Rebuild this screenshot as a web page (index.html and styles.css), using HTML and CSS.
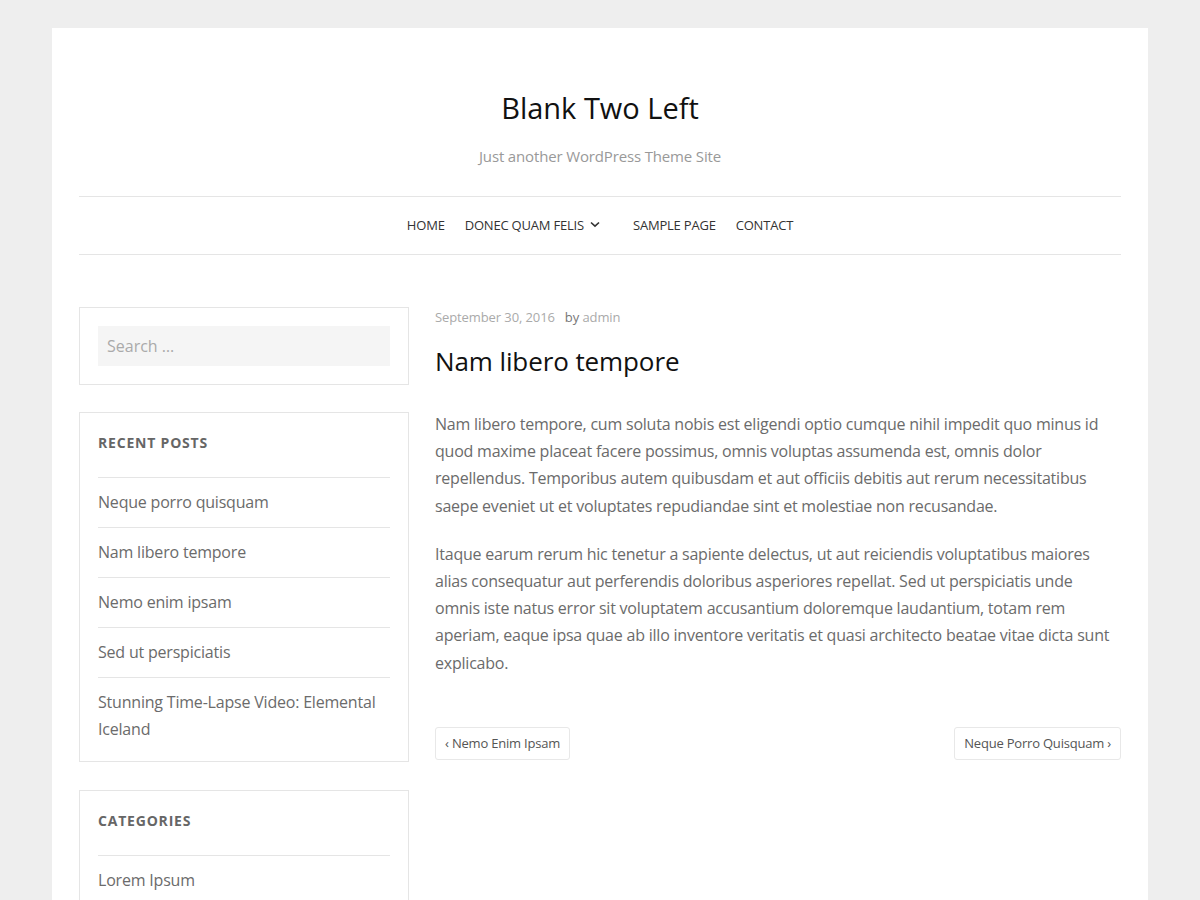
FILE: index.html
```html
<!DOCTYPE html>
<html lang="en">
<head>
<meta charset="utf-8">
<title>Blank Two Left</title>
<link rel="stylesheet" href="styles.css">
</head>
<body>
<div class="page">
  <header class="site-header">
    <h1 class="site-title">Blank Two Left</h1>
    <p class="site-desc">Just another WordPress Theme Site</p>
  </header>
  <nav class="main-nav">
    <ul class="menu">
      <li><a href="#">Home</a></li>
      <li class="has-sub"><a href="#">Donec quam felis</a>
        <svg class="chev" width="10" height="7" viewBox="0 0 10 7"><path d="M1 1.5 L5 5.2 L9 1.5" fill="none" stroke="#333" stroke-width="1.6"/></svg>
      </li>
      <li><a href="#">Sample Page</a></li>
      <li><a href="#">Contact</a></li>
    </ul>
  </nav>
  <div class="layout">
    <aside class="sidebar">
      <section class="widget search-widget">
        <input class="search-field" type="search" placeholder="Search …">
      </section>
      <section class="widget">
        <h2 class="widget-title">Recent Posts</h2>
        <ul class="widget-list">
          <li><a href="#">Neque porro quisquam</a></li>
          <li><a href="#">Nam libero tempore</a></li>
          <li><a href="#">Nemo enim ipsam</a></li>
          <li><a href="#">Sed ut perspiciatis</a></li>
          <li><a href="#">Stunning Time-Lapse Video: Elemental Iceland</a></li>
        </ul>
      </section>
      <section class="widget">
        <h2 class="widget-title">Categories</h2>
        <ul class="widget-list">
          <li><a href="#">Lorem Ipsum</a></li>
        </ul>
      </section>
    </aside>
    <main class="content">
      <article class="post">
        <div class="entry-meta"><span class="date">September 30, 2016</span><span class="by">by</span> <span class="author">admin</span></div>
        <h2 class="entry-title">Nam libero tempore</h2>
        <div class="entry-content">
          <p>Nam libero tempore, cum soluta nobis est eligendi optio cumque nihil impedit quo minus id quod maxime placeat facere possimus, omnis voluptas assumenda est, omnis dolor repellendus. Temporibus autem quibusdam et aut officiis debitis aut rerum necessitatibus saepe eveniet ut et voluptates repudiandae sint et molestiae non recusandae.</p>
          <p>Itaque earum rerum hic tenetur a sapiente delectus, ut aut reiciendis voluptatibus maiores alias consequatur aut perferendis doloribus asperiores repellat. Sed ut perspiciatis unde omnis iste natus error sit voluptatem accusantium doloremque laudantium, totam rem aperiam, eaque ipsa quae ab illo inventore veritatis et quasi architecto beatae vitae dicta sunt explicabo.</p>
        </div>
      </article>
      <nav class="post-nav">
        <a class="nav-btn" href="#">‹ Nemo Enim Ipsam</a>
        <a class="nav-btn" href="#">Neque Porro Quisquam ›</a>
      </nav>
    </main>
  </div>
</div>
</body>
</html>
```
FILE: styles.css
```css
* { box-sizing: border-box; }
html, body { margin: 0; padding: 0; }
body {
  background: #eeeeee;
  font-family: "Open Sans", "Noto Sans", sans-serif;
  color: #6b6b6b;
  padding-top: 28px;
}
a { text-decoration: none; color: inherit; }
.page {
  width: 1096px;
  margin: 0 auto;
  background: #fff;
  padding: 0 27px 40px;
  min-height: 900px;
}
.site-header {
  text-align: center;
  padding-top: 60px;
}
.site-title {
  margin: 0;
  font-size: 29px;
  line-height: 40px;
  font-weight: 400;
  color: #111;
}
.site-desc {
  margin: 17px 0 0;
  font-size: 15px;
  line-height: 22px;
  letter-spacing: -0.15px;
  color: #999;
}
.main-nav {
  margin-top: 29px;
  border-top: 1px solid #e5e5e5;
  border-bottom: 1px solid #e5e5e5;
  height: 59px;
}
.menu {
  list-style: none;
  margin: 0;
  padding: 0 0 2px;
  display: flex;
  justify-content: center;
  align-items: center;
  height: 57px;
  gap: 20px;
}
.menu li {
  display: flex;
  align-items: center;
  font-size: 13px;
  letter-spacing: -0.2px;
  text-transform: uppercase;
  color: #333;
}
.menu .has-sub { padding-right: 13px; }
.chev { margin-left: 6px; }
.layout {
  display: flex;
  gap: 26px;
  margin-top: 52px;
  align-items: flex-start;
}
.sidebar {
  width: 330px;
  flex: none;
  display: flex;
  flex-direction: column;
  gap: 28px;
}
.search-widget { margin-bottom: -1px; }
.widget {
  border: 1px solid #e5e5e5;
  padding: 18px;
}
.search-field {
  display: block;
  width: 100%;
  height: 40px;
  border: 0;
  background: #f5f5f5;
  font-family: inherit;
  font-size: 16px;
  color: #666;
  padding: 0 9px;
  outline: none;
}
.search-field::placeholder { color: #aaa; }
.widget-title {
  margin: 0 0 22px;
  font-size: 14px;
  line-height: 24px;
  font-weight: 700;
  letter-spacing: 0.8px;
  text-transform: uppercase;
  color: #666;
}
.widget-list {
  list-style: none;
  margin: 0;
  padding: 0;
}
.widget-list li {
  border-top: 1px solid #e5e5e5;
  padding: 11px 0;
  font-size: 16px;
  line-height: 27px;
  letter-spacing: -0.2px;
  color: #6b6b6b;
}
.widget-list li:last-child { padding-bottom: 0; }
.content {
  flex: 1;
  min-width: 0;
}
.entry-meta {
  font-size: 13px;
  line-height: 20px;
  letter-spacing: -0.1px;
  color: #aaa;
}
.entry-meta .date { margin-right: 10px; }
.entry-meta .by { color: #777; }
.entry-title {
  margin: 16px 0 32px;
  font-size: 26px;
  line-height: 36px;
  font-weight: 400;
  letter-spacing: -0.1px;
  color: #111;
}
.entry-content p {
  margin: 0 0 21px;
  font-size: 16px;
  line-height: 1.7;
  letter-spacing: -0.22px;
  color: #6b6b6b;
}
.post-nav {
  display: flex;
  justify-content: space-between;
  margin-top: 50px;
}
.nav-btn {
  display: block;
  border: 1px solid #e8e8e8;
  border-radius: 3px;
  padding: 6px 9px;
  font-size: 13px;
  line-height: 19px;
  letter-spacing: -0.2px;
  color: #555;
}
```
